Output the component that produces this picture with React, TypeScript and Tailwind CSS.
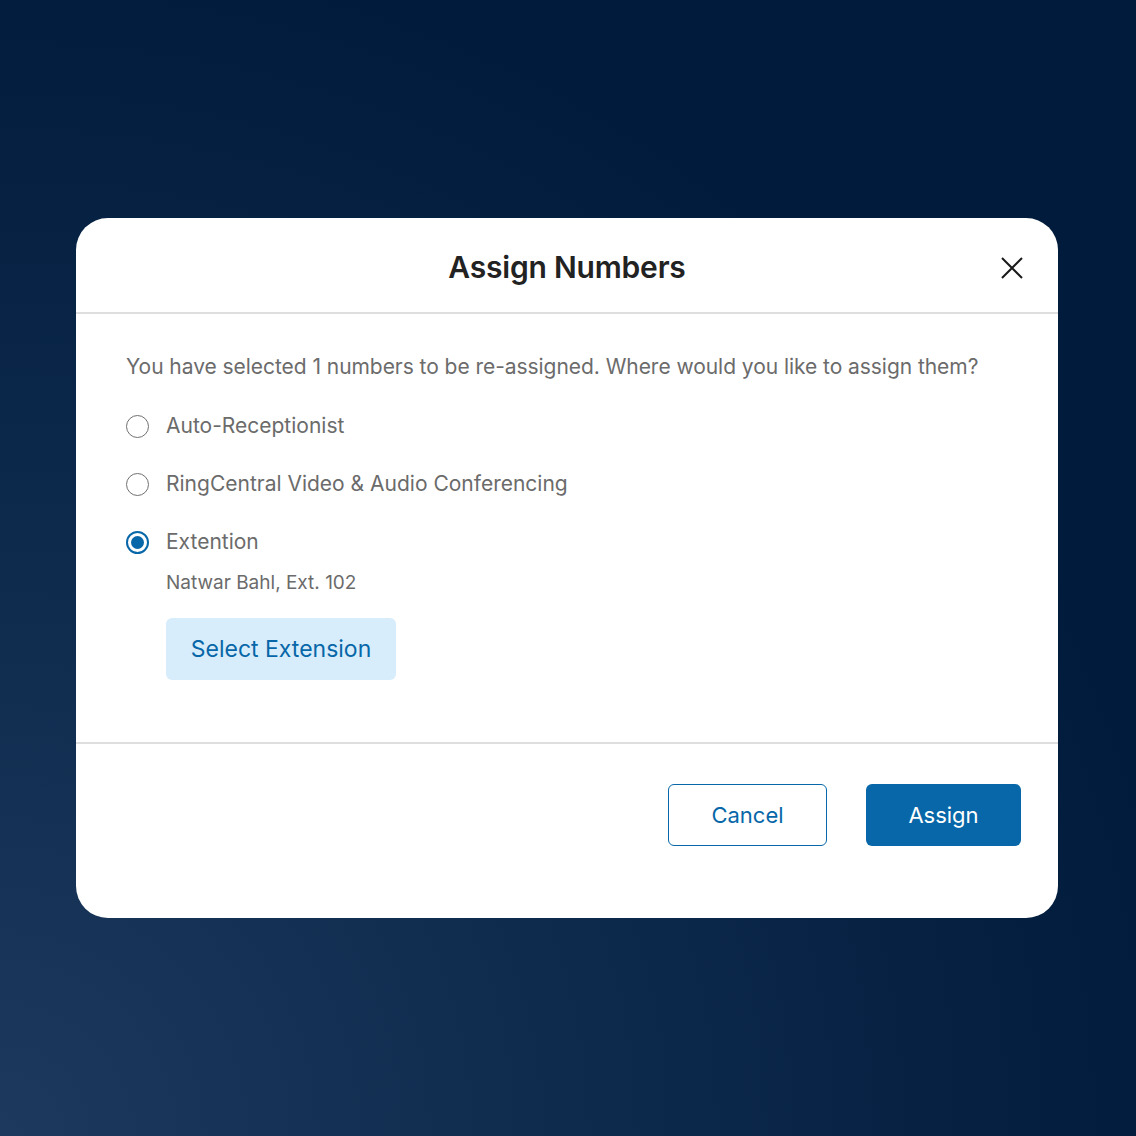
import React from "react";

function Radio({ checked, label }: { checked?: boolean; label: string }) {
  return (
    <label className="flex h-[58px] items-center gap-[17px]">
      <span
        className={
          checked
            ? "flex h-[23px] w-[23px] items-center justify-center rounded-full border-2 border-[#0767a8]"
            : "flex h-[23px] w-[23px] items-center justify-center rounded-full border-[1.5px] border-[#707070]"
        }
      >
        {checked && <span className="h-[13px] w-[13px] rounded-full bg-[#0767a8]" />}
      </span>
      <span className="text-[21px] leading-[28px] text-[#6b6b6b]">{label}</span>
    </label>
  );
}

export default function App() {
  return (
    <div
      className="flex h-[1136px] w-[1136px] items-center justify-center bg-[radial-gradient(circle_at_0%_100%,#1d3a5e_0%,#0e2a4d_35%,#001b3b_75%)]"
      style={{ fontFamily: "Inter, 'Noto Sans', sans-serif" }}
    >
      <div className="mr-[2px] flex h-[700px] w-[982px] flex-col overflow-hidden rounded-[32px] bg-white">
        <div className="relative flex h-[96px] shrink-0 items-center justify-center border-b-2 border-[#dedede]">
          <h1 className="mt-[4px] text-[30px] font-semibold tracking-[-0.2px] text-[#222222]">Assign Numbers</h1>
          <button className="absolute right-[34px] top-[38px] flex h-[24px] w-[24px] items-center justify-center text-[#1a1a1a]">
            <svg width="22" height="22" viewBox="0 0 22 22" fill="none" stroke="currentColor" strokeWidth="2">
              <path d="M1 1L21 21M21 1L1 21" />
            </svg>
          </button>
        </div>
        <div className="flex flex-col border-b-2 border-[#dedede] px-[50px] pb-[62px] pt-[39px]">
          <p className="text-[21px] leading-[28px] tracking-[-0.05px] text-[#6b6b6b]">
            You have selected 1 numbers to be re-assigned. Where would you like to assign them?
          </p>
          <div className="mt-[16px] flex flex-col">
            <Radio label="Auto-Receptionist" />
            <Radio label="RingCentral Video & Audio Conferencing" />
            <Radio label="Extention" checked />
          </div>
          <div className="pl-[40px]">
            <p className="text-[19px] leading-[24px] text-[#6b6b6b]">Natwar Bahl, Ext. 102</p>
            <button className="mt-[23px] flex h-[62px] w-[230px] items-center justify-center rounded-md bg-[#d8edfb] text-[23px] text-[#0767a8]">
              Select Extension
            </button>
          </div>
        </div>
        <div className="flex justify-end gap-[39px] pr-[37px] pt-[40px]">
          <button className="flex h-[62px] w-[159px] items-center justify-center rounded-md border-[1.5px] border-[#0767a8] text-[22px] text-[#0767a8]">
            Cancel
          </button>
          <button className="flex h-[62px] w-[155px] items-center justify-center rounded-md bg-[#0767a8] text-[22px] text-white">
            Assign
          </button>
        </div>
      </div>
    </div>
  );
}
